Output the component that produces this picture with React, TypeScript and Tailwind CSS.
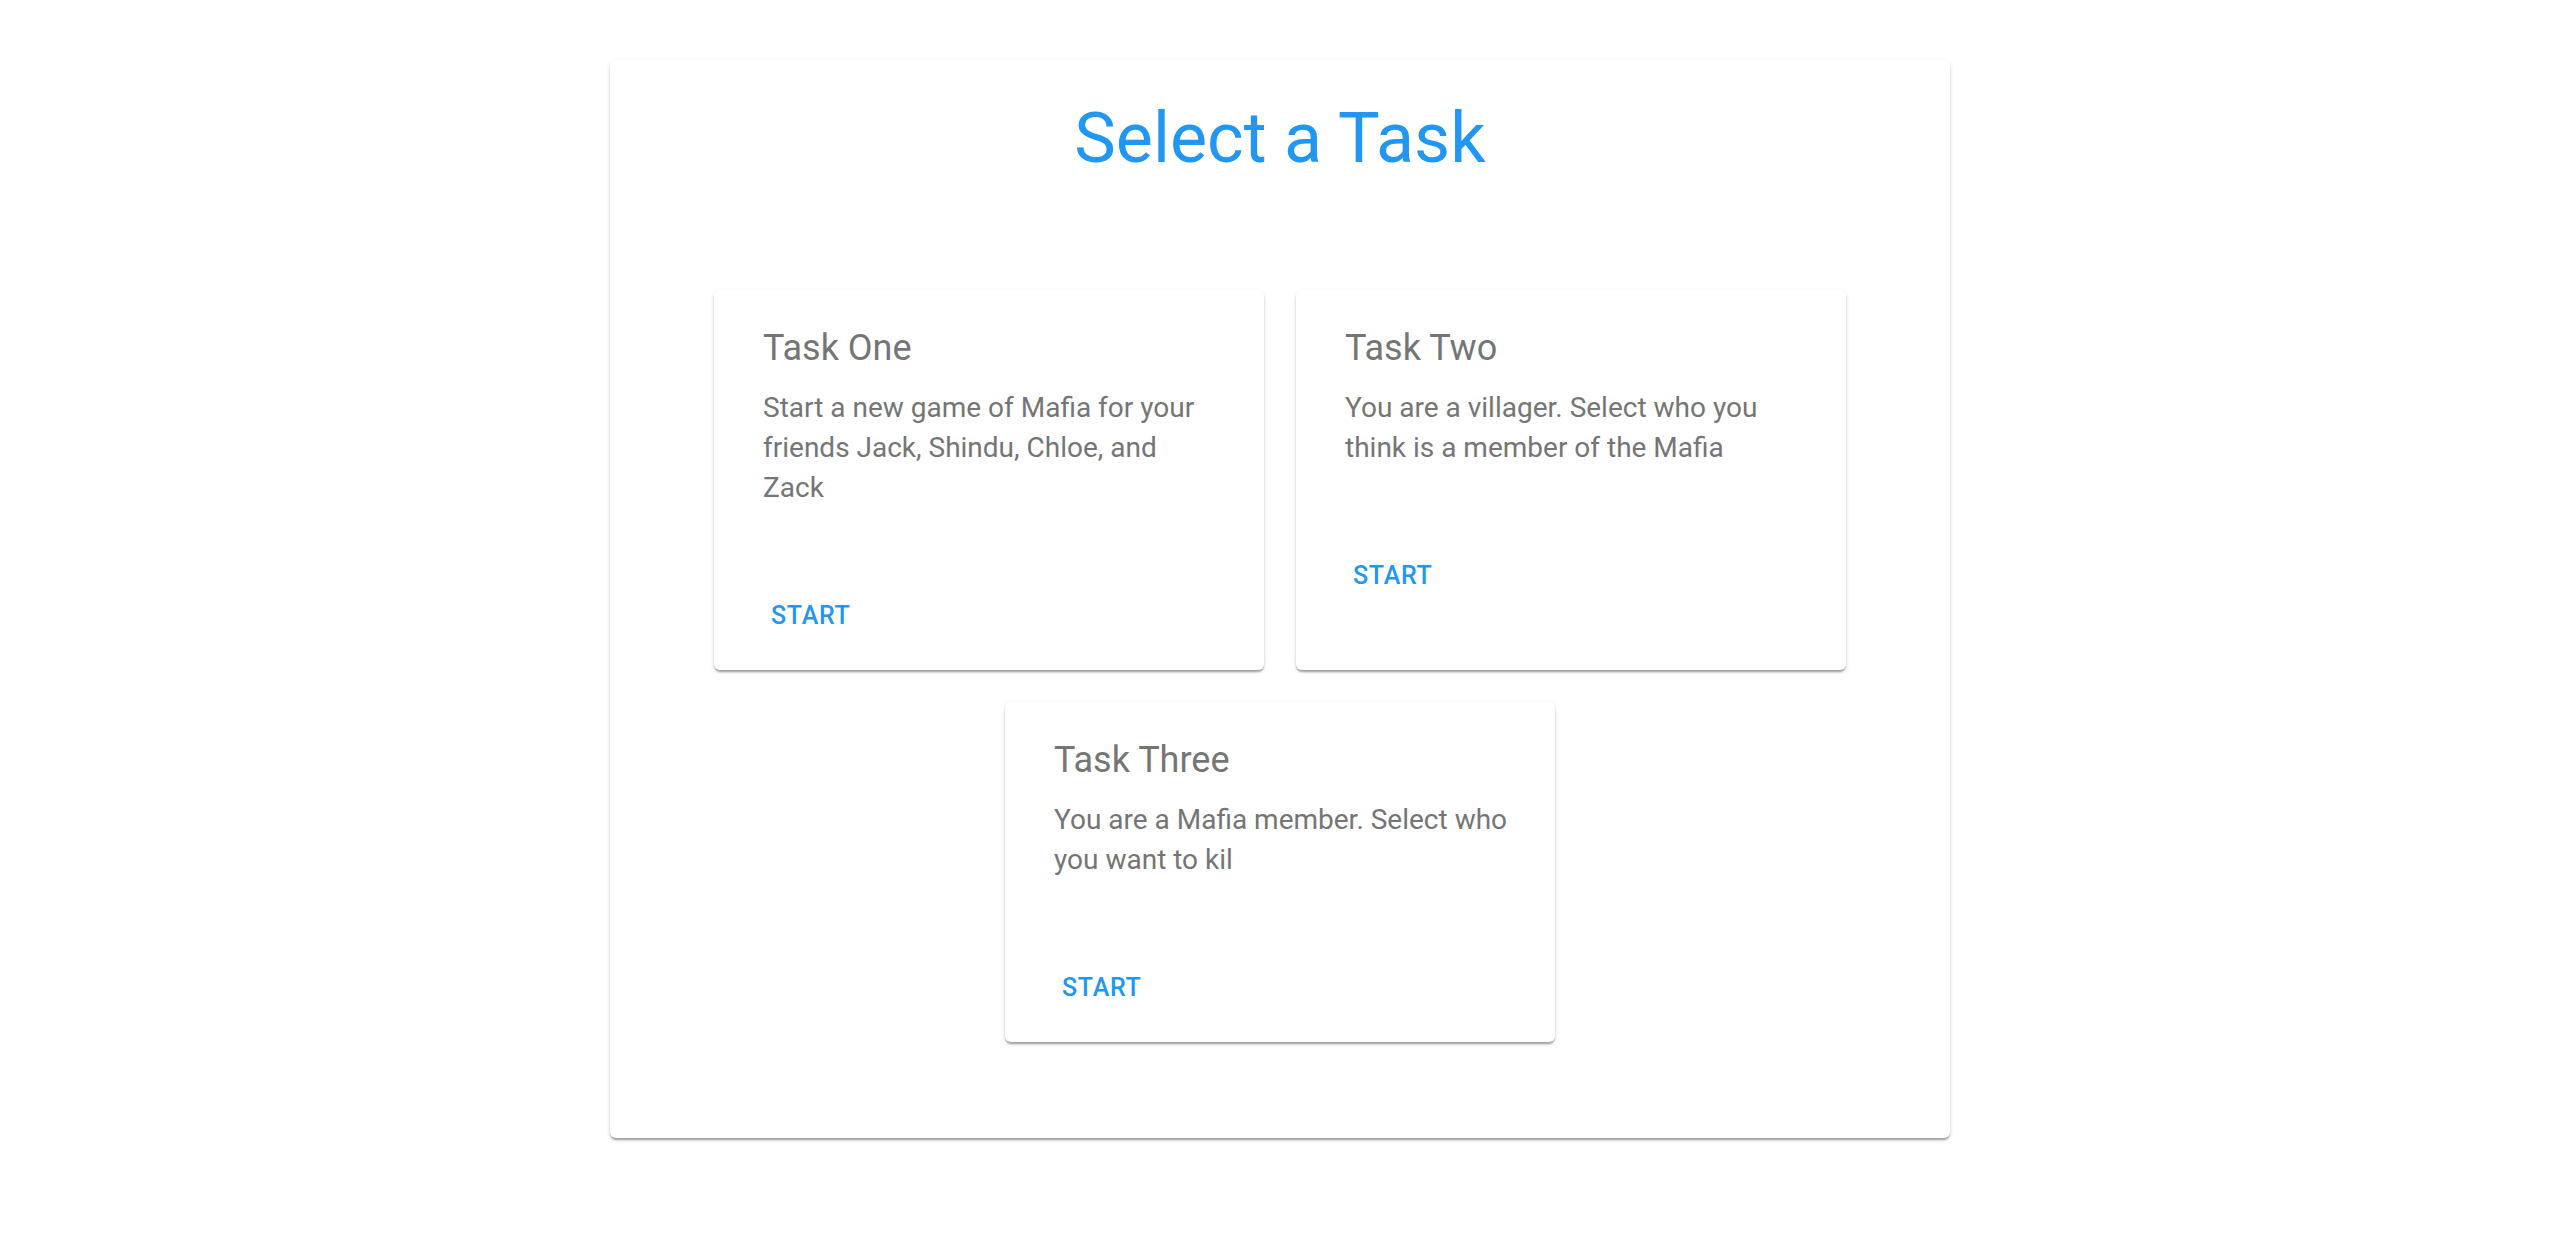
import React from "react";

const tasks = [
  {
    title: "Task One",
    body: "Start a new game of Mafia for your friends Jack, Shindu, Chloe, and Zack",
  },
  {
    title: "Task Two",
    body: "You are a villager. Select who you think is a member of the Mafia",
  },
  {
    title: "Task Three",
    body: "You are a Mafia member. Select who you want to kil",
  },
];

function TaskCard({ title, body }: { title: string; body: string }) {
  return (
    <div className="w-[550px] flex flex-col bg-white rounded-[6px] shadow-[0_3px_2px_-1px_rgba(0,0,0,0.2),0_2px_2px_0_rgba(0,0,0,0.14),0_2px_5px_0_rgba(0,0,0,0.12)]">
      <div className="pt-[34px] pl-[49px] pr-[42px] pb-[34px]">
        <div className="text-[36px] leading-[48px] text-[#757575] mb-[16px]">{title}</div>
        <div className="text-[28px] leading-[40px] text-[#757575]">{body}</div>
      </div>
      <div className="pt-[42px] pb-[22px] pl-[44px]">
        <button className="px-[13px] py-[10px] text-[25px] leading-[44px] font-medium uppercase tracking-[0.02857em] text-[#2196f3]">
          Start
        </button>
      </div>
    </div>
  );
}

export default function App() {
  return (
    <div className="min-h-screen bg-white font-['Roboto',sans-serif] pt-[60px]">
      <div className="w-[1340px] mx-auto bg-white rounded-[6px] pt-[37px] pb-[96px] shadow-[0_3px_2px_-1px_rgba(0,0,0,0.2),0_2px_2px_0_rgba(0,0,0,0.14),0_2px_5px_0_rgba(0,0,0,0.12)]">
        <h1 className="text-center text-[70px] leading-[82px] font-normal text-[#2196f3]">Select a Task</h1>
        <div className="mt-[111px] w-[1132px] mx-auto flex flex-wrap justify-center gap-[32px]">
          {tasks.map((t) => (
            <TaskCard key={t.title} title={t.title} body={t.body} />
          ))}
        </div>
      </div>
    </div>
  );
}
